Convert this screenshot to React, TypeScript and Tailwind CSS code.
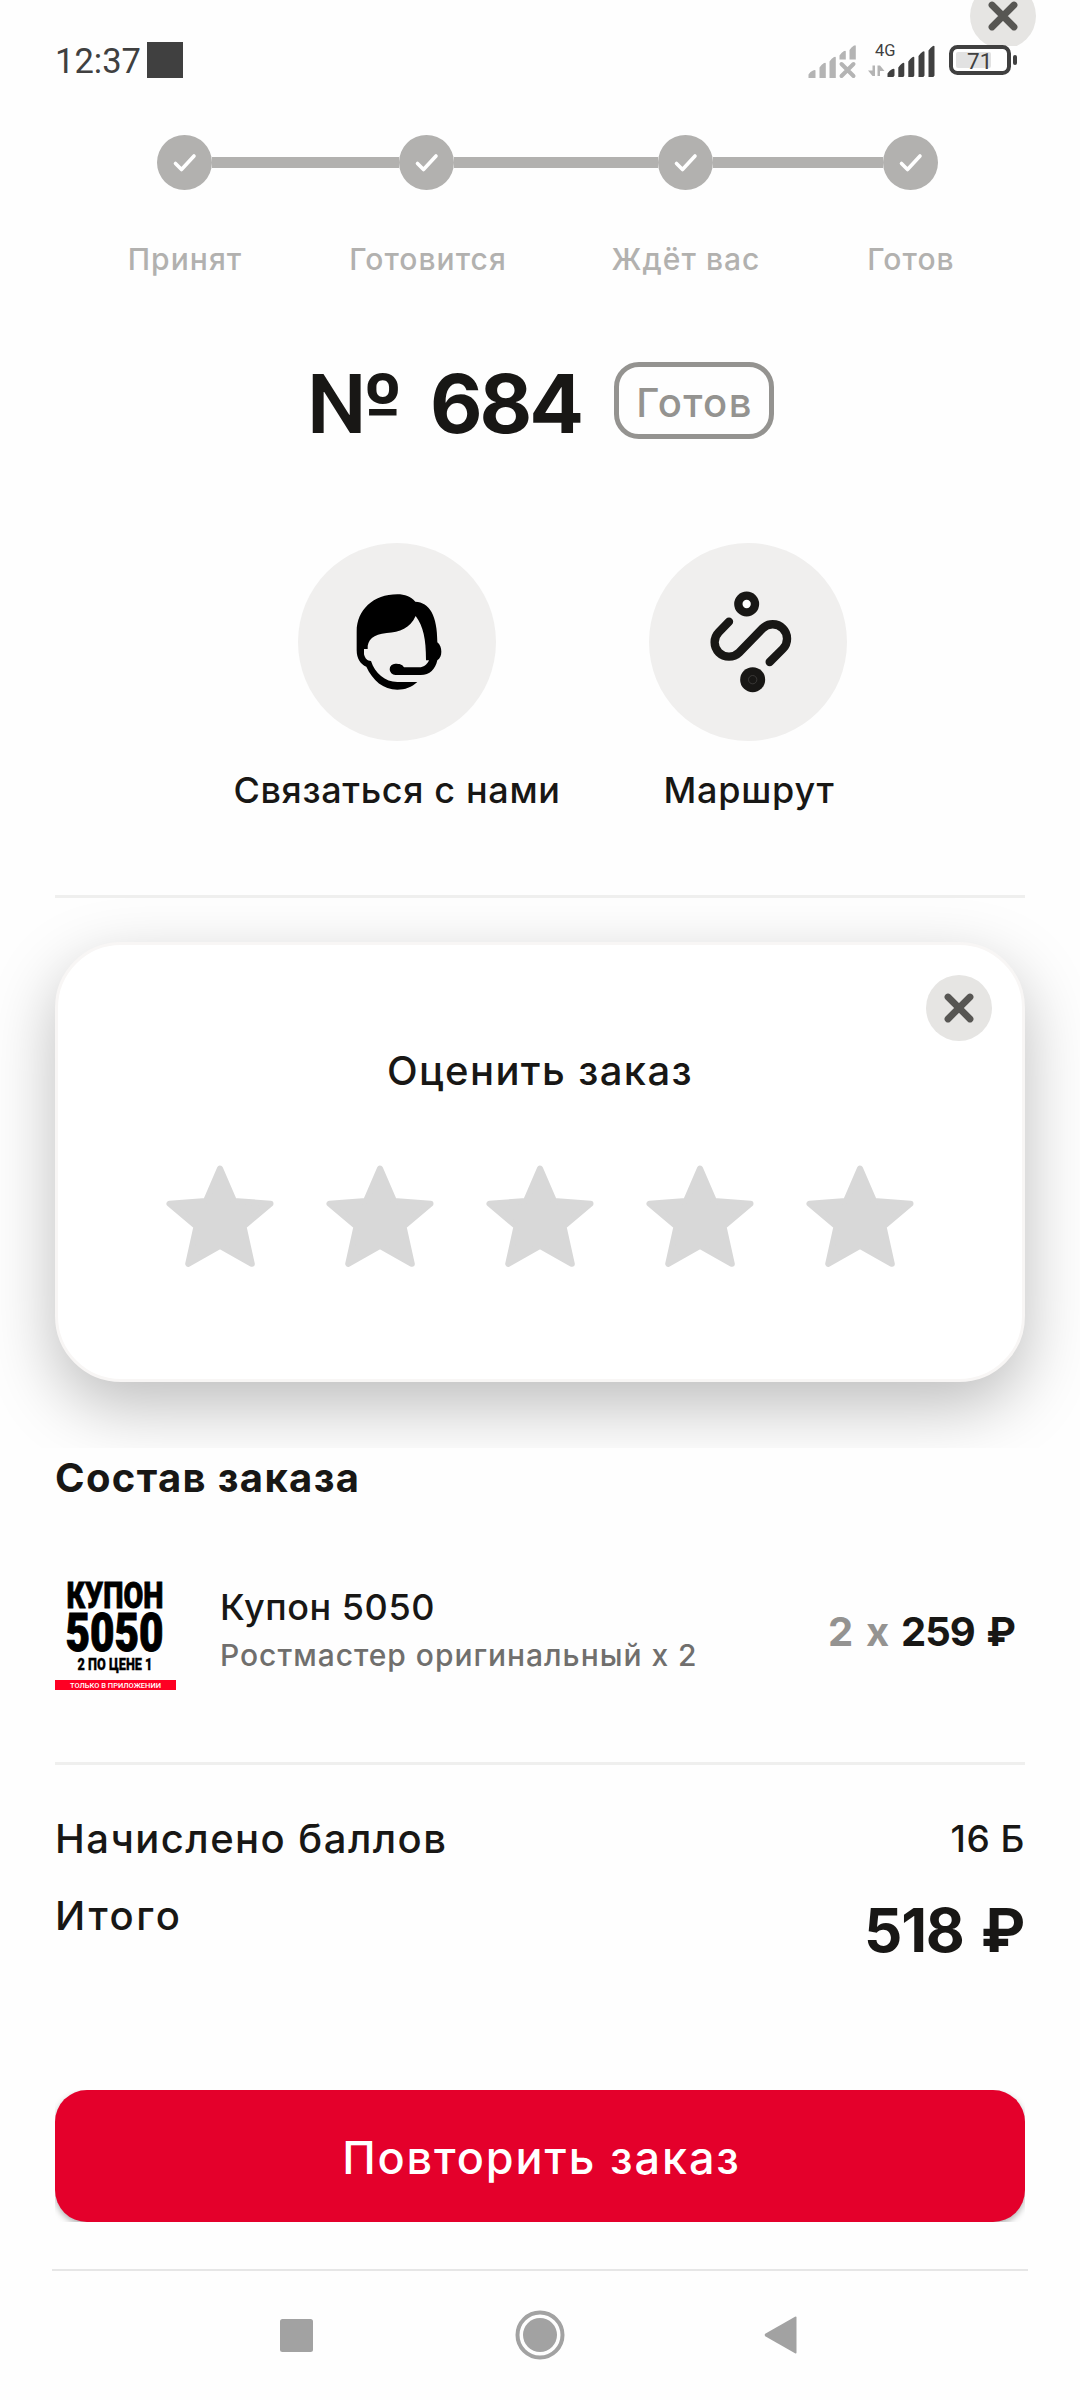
import { Fragment } from 'react';

const STEPS = [
  { label: 'Принят', labelClass: 'ml-[85px] w-[200px]', lineClass: 'w-[187px]' },
  { label: 'Готовится', labelClass: 'ml-[43px] w-[200px]', lineClass: 'w-[204px]' },
  { label: 'Ждёт вас', labelClass: 'ml-[58px] w-[200px]', lineClass: 'w-[170px]' },
  { label: 'Готов', labelClass: 'ml-[25px] w-[200px]', lineClass: '' },
];

function CloseIcon() {
  return (
    <svg viewBox="0 0 66 66" className="size-[66px]">
      <circle cx="33" cy="33" r="33" fill="#e6e5e3" />
      <path d="M22 22 44 44M44 22 22 44" stroke="#575653" strokeWidth="6.8" strokeLinecap="round" />
    </svg>
  );
}

function CheckCircle() {
  return (
    <svg viewBox="0 0 55 55" className="size-[55px] shrink-0">
      <circle cx="27.5" cy="27.5" r="27.5" fill="#b2b1af" />
      <path
        d="M18.5 28.5 24.5 34.5 37 21"
        fill="none"
        stroke="#fff"
        strokeWidth="3.6"
        strokeLinecap="round"
        strokeLinejoin="round"
      />
    </svg>
  );
}

function SupportIcon() {
  return (
    <svg viewBox="24 24 594 594" className="size-[198px]">
      <circle cx="321" cy="321" r="297" fill="#f0efee" />
      <path d="M200 345V290C200 225 250 178 322 178C345 178 362 185 376 200C418 202 442 240 442 322C450 328 454 338 454 350C454 362 450 370 442 376C436 403 420 420 392 420H316A17 17 0 1 1 316 386C328 386 338 388 342 397H388C400 397 411 390 417 376H408C408 310 400 275 377 243C360 280 330 292 290 294C250 298 231 315 233 342H222V358C226 372 232 378 243 378C255 415 285 441 322 441H382C365 457 345 464 322 464C280 464 248 436 229 395C212 388 200 372 200 345Z" />
    </svg>
  );
}

function RouteIcon() {
  return (
    <svg viewBox="27 24 594 594" className="size-[198px]" fill="none" stroke="#181715">
      <circle cx="324" cy="321" r="297" fill="#f0efee" stroke="none" />
      <circle cx="320" cy="207" r="25" fill="#fff" strokeWidth="25" />
      <path
        d="M267 260 236.5 291.5A43 43 0 0 0 297.5 352.5L367.5 280.5A43 43 0 0 1 428.5 341.5L389 381"
        strokeWidth="25"
        strokeLinecap="round"
      />
      <circle cx="338" cy="434" r="37.5" fill="#181715" stroke="none" />
      <circle cx="338" cy="434" r="12.5" stroke="#4a4947" strokeWidth="2" />
    </svg>
  );
}

function Star() {
  return (
    <svg viewBox="0 0 108 103" className="h-[103px] w-[108px]">
      <path
        d="M54 3.5 68 36 104.5 38.7 77.5 61.5 85.8 98.8 54 80.8 22.2 98.8 30.5 61.5 3.5 38.7 40 36Z"
        fill="#d8d8d8"
        stroke="#d8d8d8"
        strokeWidth="6"
        strokeLinejoin="round"
      />
    </svg>
  );
}

function StatusIcons() {
  return (
    <svg viewBox="800 0 225 100" className="h-[100px] w-[225px] font-[Roboto] font-normal">
      {/* first SIM, no service */}
      <path
        d="M808.5 78V74.5L810.5 72Q815 69 815.5 70.5V78ZM819.5 78V67.5L821.5 65Q825.5 61.5 825.8 63.5V78ZM829.5 78V61.5L831.5 59Q835.5 55.5 835.8 57.5V78ZM839.5 59.5V55.5L841.5 53Q845.5 49.5 845.8 51.5V59.5ZM849.5 59.5V50L851.5 47.5Q855.5 44 855.8 46V59.5Z"
        fill="#b4b4b4"
      />
      <path d="M841.5 64 853.5 76M853.5 64 841.5 76" stroke="#b4b4b4" strokeWidth="4" strokeLinecap="round" />
      {/* second SIM, 4G */}
      <text x="875" y="55.5" fontSize="16.5" fill="#404040">
        4G
      </text>
      <path d="M872.5 65.5H875V76H872.5L868 70.5H872.5ZM877.5 65.5H880L884.5 71H880V76H877.5Z" fill="#b4b4b4" />
      <path
        d="M887.5 77V73.5L889.5 71Q894 67.5 894.5 69.5V75.5Q894 77 892.5 77ZM898.3 77V67.5L900.3 65Q904 61.5 904.3 63.5V75.5Q904 77 902.5 77ZM908.3 77V61.5L910.3 59Q914 55.5 914.3 57.5V75.5Q914 77 912.5 77ZM918.5 77V56L920.5 53.5Q924.3 50 924.5 52V75.5Q924 77 922.5 77ZM928.5 77V50.5L930.5 48Q934.3 44.5 934.5 46.5V75.5Q934 77 932.5 77Z"
        fill="#404040"
      />
      {/* battery */}
      <rect x="951" y="47" width="58" height="26" rx="6.5" fill="#fff" stroke="#404040" strokeWidth="4" />
      <rect x="956" y="52" width="35" height="16" rx="2" fill="#e2e2e2" />
      <rect x="1013" y="55" width="4" height="10" rx="2" fill="#404040" />
      <text x="967" y="69" fontSize="22.5" fill="#404040">
        71
      </text>
    </svg>
  );
}

function CouponPicture() {
  return (
    <svg viewBox="0 0 121 121" className="size-[121px] shrink-0 overflow-visible font-[Roboto] font-black">
      <g stroke="#000">
        <text x="11.5" y="32.5" fontSize="37" strokeWidth="0.8" textLength="97" lengthAdjust="spacingAndGlyphs">
          КУПОН
        </text>
        <text x="10.5" y="76" fontSize="53" strokeWidth="1" textLength="98" lengthAdjust="spacingAndGlyphs">
          5050
        </text>
        <text x="22.5" y="95" fontSize="17" strokeWidth="0.3" textLength="75" lengthAdjust="spacingAndGlyphs">
          2 ПО ЦЕНЕ 1
        </text>
      </g>
      <rect y="105" width="121" height="10" fill="#fe0023" />
      <text x="15" y="112.5" fontSize="7" fontWeight="500" fill="#fff" textLength="91" lengthAdjust="spacingAndGlyphs">
        ТОЛЬКО В ПРИЛОЖЕНИИ
      </text>
    </svg>
  );
}

export default function App() {
  return (
    <div className="relative flex h-[2400px] w-[1080px] flex-col overflow-hidden bg-[#fefefe] font-[Inter,sans-serif] font-medium text-[#181715]">
      {/* sheet close button, cut off by the status bar */}
      <div className="absolute top-0 left-[970px] h-[46px] w-[66px] overflow-hidden">
        <div className="-mt-[17px]">
          <CloseIcon />
        </div>
      </div>

      <header className="relative flex h-[100px] shrink-0 justify-between pr-[55px] pl-[55px]">
        <div className="flex pt-[42px]">
          <span className="w-[92px] font-[Roboto] text-[34.5px] leading-[38px] font-normal text-[#404040]">12:37</span>
          <span className="h-[36px] w-[36px] bg-[#404040]" />
        </div>
        <StatusIcons />
      </header>

      <div className="mt-[35px] flex items-center pl-[157px]">
        {STEPS.map((s) => (
          <Fragment key={s.label}>
            <CheckCircle />
            {s.lineClass && <div className={`h-[11px] bg-[#b2b1af] ${s.lineClass}`} />}
          </Fragment>
        ))}
      </div>
      <div className="mt-[51px] flex text-center text-[30px] leading-[36px] tracking-[1.05px] text-[#b2b1af]">
        {STEPS.map((s) => (
          <span key={s.label} className={s.labelClass}>
            {s.label}
          </span>
        ))}
      </div>

      <div className="mt-[85px] flex h-[77px] items-center pl-[307px]">
        <h1 className="flex w-[308px] shrink-0 pt-[7px] text-[81px] leading-[71px] font-bold">
          <span className="w-[123px] origin-left scale-x-108">№</span>
          <span className="tracking-[-3px]">684</span>
        </h1>
        <span className="-ml-px flex h-[77px] w-[160px] shrink-0 items-center justify-center rounded-[25px] border-5 border-[#949390] pt-1 pl-px text-[40px] leading-none tracking-[1.4px] text-[#949390]">
          Готов
        </span>
      </div>

      <div className="mt-[104px] flex gap-[86px] pl-[232px] text-[36px] leading-[40px]">
        <button className="flex w-[330px] flex-col items-center gap-[29px]">
          <SupportIcon />
          <span className="tracking-[0.65px] whitespace-nowrap">Связаться с нами</span>
        </button>
        <button className="flex w-[200px] flex-col items-center gap-[29px]">
          <RouteIcon />
          <span className="pl-[2px] tracking-[0.75px]">Маршрут</span>
        </button>
      </div>

      <div className="mx-[55px] mt-[85px] h-[3px] shrink-0 bg-[#efefee]" />

      {/* the card's shadow stops where the order section begins */}
      <section className="h-[550px] shrink-0 overflow-hidden px-[55px] pt-[44px]">
        <div className="relative flex h-[440px] flex-col items-center rounded-[66px] border-3 border-[#f8f6f5] bg-white pt-[101px] shadow-[0_24px_66px_rgba(0,0,0,0.26)]">
          <button aria-label="Закрыть" className="absolute top-[30px] right-[30px]">
            <CloseIcon />
          </button>
          <h2 className="text-[40px] leading-[49px] tracking-[1.4px]">Оценить заказ</h2>
          <div className="mt-[70px] flex gap-[52px]">
            {[1, 2, 3, 4, 5].map((n) => (
              <Star key={n} />
            ))}
          </div>
        </div>
      </section>

      <section className="px-[55px] pt-[5px]">
        <h2 className="text-[40px] leading-[49px] font-bold tracking-[1.35px]">Состав заказа</h2>
        <div className="mt-[73px] flex h-[121px]">
          <CouponPicture />
          <div className="ml-[44px] flex-1 pt-[8px] whitespace-nowrap">
            <p className="text-[36px] leading-[48px] tracking-[0.55px]">Купон 5050</p>
            <p className="text-[30px] leading-[48px] tracking-[0.97px] text-[#706f6d]">Ростмастер оригинальный x 2</p>
          </div>
          <p className="flex pt-[32px] pr-[10px] text-[40px] leading-[49px] font-bold">
            <span className="w-[73px] tracking-[1.6px] text-[#949391]">2 x</span>
            <span className="tracking-[-1px] [word-spacing:3px]">259 ₽</span>
          </p>
        </div>
        <div className="mt-[66px] h-[3px] bg-[#efefee]" />
        <dl className="mt-[49px] flex flex-col gap-[28px] text-[40px] leading-[49px]">
          <div className="flex justify-between">
            <dt className="tracking-[1.45px]">Начислено баллов</dt>
            <dd className="text-[37px] tracking-[0.5px]">16 Б</dd>
          </div>
          <div className="flex justify-between">
            <dt className="tracking-[2.6px]">Итого</dt>
            <dd className="pr-px text-[60px] leading-[78px] font-bold tracking-[-1.2px] [word-spacing:4px]">518 ₽</dd>
          </div>
        </dl>
      </section>

      <div className="mx-[55px] mt-[121px] h-[132px] shrink-0 overflow-hidden">
        <button className="h-[132px] w-full rounded-[32px] bg-[#e4002b] pt-[3px] pl-[3px] text-[45px] tracking-[1.9px] text-white shadow-[0_3px_6px_rgba(0,0,0,0.3)]">
          Повторить заказ
        </button>
      </div>

      <div className="mx-[52px] mt-[47px] h-[2px] shrink-0 bg-[#e6e6e6]" />
      <nav className="flex h-[128px] shrink-0 items-center pl-[280px]">
        <svg viewBox="0 0 33 33" className="size-[33px]" fill="#a2a2a2">
          <rect width="33" height="33" rx="2.5" />
        </svg>
        <svg viewBox="0 0 50 50" className="ml-[202px] size-[50px]" fill="#a2a2a2">
          <circle cx="25" cy="25" r="22.5" fill="none" stroke="#a2a2a2" strokeWidth="4" />
          <circle cx="25" cy="25" r="17" />
        </svg>
        <svg viewBox="0 0 33 38" className="ml-[199px] h-[38px] w-[33px]" fill="#a2a2a2">
          <path d="M31 .8Q32.500 0 32.500 1.500V36.500Q32.500 38 31 37.200L1.200 20.200Q0 19 1.200 17.800Z" />
        </svg>
      </nav>
    </div>
  );
}
